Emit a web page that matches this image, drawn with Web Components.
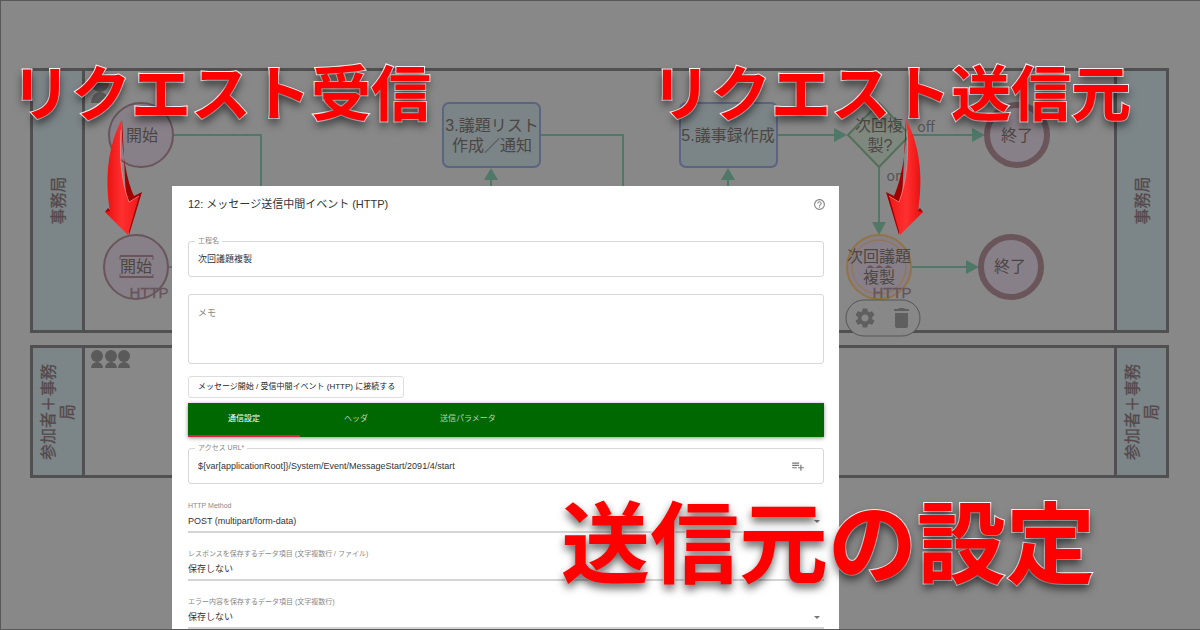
<!DOCTYPE html>
<html lang="ja">
<head>
<meta charset="utf-8">
<title>送信元の設定</title>
<style>
  html, body { height: 100%; }
  body { margin: 0; overflow: hidden; background: #888; font-family: "Liberation Sans", "Noto Sans CJK JP", sans-serif; }
</style>
</head>
<body>
<app-stage>
  <swim-lane people="1" size="tall">事務局</swim-lane>
  <swim-lane people="3">参加者＋事務局</swim-lane>
  <flow-graph slot="over"></flow-graph>
  <event-dialog slot="over" heading="12: メッセージ送信中間イベント (HTTP)">
    <text-field label="工程名" value="次回議題複製"></text-field>
    <text-field label="メモ" multiline></text-field>
    <connect-button>メッセージ開始 / 受信中間イベント (HTTP) に接続する</connect-button>
    <tab-bar tabs="通信設定,ヘッダ,送信パラメータ"></tab-bar>
    <text-field label="アクセス URL*" value="${var[applicationRoot]}/System/Event/MessageStart/2091/4/start" insert></text-field>
    <select-field label="HTTP Method" value="POST (multipart/form-data)"></select-field>
    <select-field label="レスポンスを保存するデータ項目 (文字複数行 / ファイル)" value="保存しない"></select-field>
    <select-field label="エラー内容を保存するデータ項目 (文字複数行)" value="保存しない"></select-field>
  </event-dialog>
  <callout-text slot="over" class="receive">リクエスト受信</callout-text>
  <callout-text slot="over" class="send">リクエスト送信元</callout-text>
  <callout-text slot="over" class="main">送信元の設定</callout-text>
  <red-arrow slot="over" class="left"></red-arrow>
  <red-arrow slot="over" class="right"></red-arrow>
</app-stage>

<script>
const define = (name, render) => customElements.define(name, class extends HTMLElement {
  constructor() { super(); this.attachShadow({ mode: 'open' }); }
  connectedCallback() { this.shadowRoot.innerHTML = render(this); }
});

define('app-stage', () => `
<style>
  :host { display: block; position: relative; box-sizing: border-box; height: 100vh; overflow: hidden; border: solid #585858; border-width: 1px 0 1px 1px; }
  .lanes { display: flex; flex-direction: column; gap: 12px; padding: 67px 31px 0 29px; }
  ::slotted(flow-graph) { position: absolute; left: -1px; top: -1px; }
  ::slotted(event-dialog) { position: absolute; left: 171px; right: 361px; top: 185px; }
  ::slotted(callout-text) { position: absolute; font-size: 60px; }
  ::slotted(.receive) { left: 10px; top: 59px; }
  ::slotted(.send) { left: 650px; top: 59px; }
  ::slotted(callout-text.main) { left: 560px; top: 492px; font-size: 89px; }
  ::slotted(red-arrow) { position: absolute; top: 117px; }
  ::slotted(red-arrow.left) { left: 102px; }
  ::slotted(red-arrow.right) { left: 884px; transform: scaleX(-1); }
</style>
<div class="lanes"><slot></slot></div>
<slot name="over"></slot>`);

define('swim-lane', el => {
  const one = '<circle cx="9" cy="10" r="9"/><path d="M0 30a9 11 0 0 1 18 0z"/>';
  const three = [0, 14, 27].map(x => `<g transform="translate(${x} 0)"><circle cx="6" cy="6" r="6"/><path d="M0 18a6 6 0 0 1 12 0z"/></g>`).join('');
  return `
<style>
  :host { display: flex; box-sizing: border-box; height: 133px; border: 3px solid #505050; }
  :host([size=tall]) { height: 265px; }
  .side { flex: none; box-sizing: border-box; width: 52px; display: flex; align-items: center; justify-content: center; background: #7c8588; }
  .side:first-of-type { border-right: 3px solid #505050; }
  .side:last-of-type { border-left: 3px solid #505050; }
  .side span { flex: none; width: 104px; text-align: center; transform: rotate(-90deg); font-size: 16px; line-height: 19px; color: #544848; -webkit-text-stroke: .3px #544848; }
  .body { flex: 1; }
  svg { display: block; margin: 2px 0 0 6px; fill: #5a5a5a; }
</style>
<div class="side"><span>${el.textContent}</span></div>
<main class="body"><svg width="42" height="30">${el.getAttribute('people') === '1' ? one : three}</svg></main>
<div class="side"><span>${el.textContent}</span></div>`;
});

define('flow-graph', () => {
  const label = (x, y, s, c = '') => `<text x="${x}" y="${y}" class="${c}">${s}</text>`;
  return `
<style>
  :host { display: block; }
  svg { display: block; }
  text { font-size: 16px; text-anchor: middle; fill: #4c4643; }
  .small { font-family: "Noto Sans CJK JP", sans-serif; font-size: 14px; fill: #555; }
  .http { font-size: 15px; fill: #66555a; stroke: #66555a; stroke-width: .3px; }
  .line { fill: none; stroke: #4f7869; stroke-width: 2; }
  .head { fill: #4f7869; }
  .task { fill: #7b8487; stroke: #5b6480; stroke-width: 2; }
  .start { fill: #888088; stroke: #69555a; stroke-width: 2; }
  .end { fill: #888088; stroke: #69555a; stroke-width: 6; }
</style>
<svg width="1200" height="500">
  <path class="line" d="M174 135H261V200M540 135H623V200M491 179V200M728 179V200M777 135H838M909 135H973M879 167V226M911 267H968M168 267H185"/>
  <path class="head" d="M491 168l7 12h-14zM728 168l7 12h-14zM847 135l-13 7v-14zM985 135l-13 7v-14zM879 235l-7-13h14zM979 267l-13 7v-14z"/>
  <circle class="start" cx="141" cy="135" r="32"/>
  <circle class="start" cx="136" cy="267" r="32"/>
  <path d="M120 256h33M120 277h33" stroke="#69555a" stroke-width="2"/><path d="M120 256v22M153 256v22" stroke="#69555a" stroke-dasharray="4 14"/>
  <rect class="task" x="443" y="103" width="97" height="64" rx="6"/>
  <rect class="task" x="680" y="103" width="97" height="64" rx="6"/>
  <path d="M848 135l31-32 31 32-31 32z" fill="#7f887f" stroke="#55705a" stroke-width="2"/>
  <circle class="end" cx="1017" cy="135" r="30"/>
  <circle class="end" cx="1011" cy="267" r="30"/>
  <g fill="#888088" stroke="#937345" stroke-width="2"><circle cx="879" cy="267" r="32"/><circle cx="879" cy="267" r="27" stroke-width="1"/></g>
  <path d="M866 268l4-3 5 3 4-3 5 3 4-3 5 3z" fill="#69555a"/>
  ${label(142, 141, '開始')}${label(136, 272, '開始')}
  ${label(149, 298, 'HTTP', 'http')}
  ${label(492, 131, '3.議題リスト')}${label(492, 151, '作成／通知')}
  ${label(728, 141, '5.議事録作成')}
  ${label(879, 131, '次回複')}${label(880, 151, '製?')}
  ${label(926, 132, 'off', 'small')}${label(895, 181, 'on', 'small')}
  ${label(1017, 141, '終了')}${label(1010, 272, '終了')}
  ${label(879, 262, '次回議題')}${label(879, 283, '複製')}
  ${label(892, 298, 'HTTP', 'http')}
  <rect x="846" y="300" width="74" height="36" rx="18" fill="#888" stroke="#555"/>
  <g fill="#5f5f5f">
    <path transform="translate(853 306)" d="M19.14 12.94c.04-.3.06-.61.06-.94 0-.32-.02-.64-.07-.94l2.03-1.58c.18-.14.23-.41.12-.61l-1.92-3.32c-.12-.22-.37-.29-.59-.22l-2.39.96c-.5-.38-1.03-.7-1.62-.94l-.36-2.54c-.04-.24-.24-.41-.48-.41h-3.84c-.24 0-.43.17-.47.41l-.36 2.54c-.59.24-1.13.57-1.62.94l-2.39-.96c-.22-.08-.47 0-.59.22L2.74 8.87c-.12.21-.08.47.12.61l2.03 1.58c-.05.3-.09.63-.09.94s.02.64.07.94l-2.03 1.58c-.18.14-.23.41-.12.61l1.92 3.32c.12.22.37.29.59.22l2.39-.96c.5.38 1.03.7 1.62.94l.36 2.54c.05.24.24.41.48.41h3.84c.24 0 .44-.17.47-.41l.36-2.54c.59-.24 1.13-.56 1.62-.94l2.39.96c.22.08.47 0 .59-.22l1.92-3.32c.12-.22.07-.47-.12-.61l-2.01-1.58zM12 15.6c-1.98 0-3.6-1.62-3.6-3.6s1.62-3.6 3.6-3.6 3.6 1.62 3.6 3.6-1.62 3.6-3.6 3.6z"/>
    <path transform="translate(889 306)" d="M6 20c0 1.100.9 2 2 2h9c1.100 0 2-.9 2-2V7H6zM20 3h-4l-1-1h-5l-1 1H5v2h15z"/>
  </g>
</svg>`;
});

define('event-dialog', el => `
<style>
  :host { display: block; box-sizing: border-box; min-height: 480px; padding: 0 15px 0 16px; background: #fff; color: #444; }
  header { display: flex; align-items: center; justify-content: space-between; height: 36px; margin-bottom: 19px; }
  h1 { margin: 0; font-size: 11px; font-weight: 400; line-height: 16px; color: #333; }
  button { padding: 0; margin-right: -2px; border: 0; background: none; height: 12px; }
  svg { display: block; fill: #888; }
</style>
<header><h1>${el.getAttribute('heading')}</h1>
<button aria-label="help"><svg width="13" height="13" viewBox="0 0 24 24"><path d="M11 18h2v-2h-2v2zm1-16C6.480 2 2 6.480 2 12s4.480 10 10 10 10-4.480 10-10S17.520 2 12 2zm0 18c-4.410 0-8-3.590-8-8s3.590-8 8-8 8 3.590 8 8-3.590 8-8 8zm0-14c-2.210 0-4 1.790-4 4h2c0-1.100.9-2 2-2s2 .9 2 2c0 2-3 1.750-3 5h2c0-2.250 3-2.500 3-5 0-2.210-1.790-4-4-4z"/></svg></button></header>
<slot></slot>`);

define('text-field', el => `
<style>
  :host { display: flex; align-items: center; position: relative; box-sizing: border-box; height: 36px; margin-bottom: 17px; border: 1px solid #d8d8d8; border-radius: 3px; padding: 0 18px 0 9px; }
  :host([multiline]) { height: 70px; margin-bottom: 12px; }
  :host([insert]) { margin-bottom: 17px; }
  label { position: absolute; left: 6px; top: -6px; padding: 0 3px; background: #fff; font-size: 7px; line-height: 9px; color: #888; }
  :host([multiline]) label { top: 12px; font-size: 9px; line-height: 12px; }
  input, textarea { flex: 1; min-width: 0; box-sizing: border-box; border: 0; padding: 0; outline: 0; resize: none; background: none; font: 9px/16px "Liberation Sans", "Noto Sans CJK JP", sans-serif; color: #333; }
  textarea { height: 60px; }
  button { padding: 0; border: 0; background: none; }
  svg { display: block; fill: #777; }
</style>
<label for="f">${el.getAttribute('label')}</label>
${el.hasAttribute('multiline') ? '<textarea id="f"></textarea>' : `<input id="f" value="${el.getAttribute('value')}">`}
${el.hasAttribute('insert') ? '<button aria-label="insert"><svg width="14" height="14" viewBox="0 0 24 24"><path d="M14 10H2v2h12v-2zm0-4H2v2h12V6zm4 8v-4h-2v4h-4v2h4v4h2v-4h4v-2h-4zM2 16h8v-2H2v2z"/></svg></button>' : ''}`);

define('connect-button', () => `
<style>
  :host { display: flex; margin-bottom: 5px; }
  button { box-sizing: border-box; height: 22px; padding: 0 8px 0 9px; border: 1px solid #ddd; border-radius: 3px; background: #fff; color: #222; font: 8px/16px "Liberation Sans", "Noto Sans CJK JP", sans-serif; }
</style>
<button><slot></slot></button>`);

define('tab-bar', el => `
<style>
  :host { display: flex; height: 34px; margin-bottom: 11px; background: #006800; box-shadow: 0 1px 4px rgba(0,0,0,.45); }
  button { width: 112px; padding: 0; border: 0; border-bottom: 2px solid transparent; background: none; color: #b5d3b5; font: 8px/16px "Liberation Sans", "Noto Sans CJK JP", sans-serif; }
  button:first-of-type { border-color: #e0204a; color: #fff; }
</style>
${el.getAttribute('tabs').split(',').map((t, i) => `<button role="tab" aria-selected="${i === 0}">${t}</button>`).join('')}`);

define('select-field', el => `
<style>
  :host { display: flex; flex-direction: column; position: relative; box-sizing: border-box; height: 32px; margin-bottom: 16px; border-bottom: 2px solid #d4d4d4; }
  label { font-size: 7px; line-height: 10px; color: #888; }
  select { appearance: none; height: 20px; width: 100%; padding: 0; border: 0; background: none; font: 9px/20px "Liberation Sans", "Noto Sans CJK JP", sans-serif; color: #333; outline: 0; }
  svg { position: absolute; right: 4px; bottom: 8px; fill: #777; }
</style>
<label for="s">${el.getAttribute('label')}</label>
<select id="s"><option>${el.getAttribute('value')}</option></select>
<svg width="6" height="3"><path d="M0 0h6L3 3z"/></svg>`);

define('callout-text', () => `
<style>
  :host { display: block; white-space: nowrap; line-height: 1; font-family: "Noto Sans CJK JP", sans-serif; font-weight: 700; color: #f00; -webkit-text-stroke: 2px #fff; paint-order: stroke fill; text-shadow: 0 5px 8px rgba(0,0,0,.6); }
</style>
<slot></slot>`);

define('red-arrow', () => `
<style>
  :host { display: block; }
  svg { display: block; }
</style>
<svg width="40" height="120">
  <defs><linearGradient id="g" x1="0" y1="0" x2="1" y2="0"><stop offset="0" stop-color="#e80c0c"/><stop offset=".5" stop-color="#ff3030"/><stop offset="1" stop-color="#f01818"/></linearGradient></defs>
  <path d="M19 1C18 30 23 60 31 78L39 74 26 117 24 100z" fill="#a00000"/>
  <path d="M2 94L5 90 9 94z" fill="#a00000"/>
  <path d="M19 1C4 30 2 62 7 93L2 94 25 117 36 78 26 84C19 65 15 40 19 1z" fill="url(#g)"/>
  <path d="M18 12C16 40 19 66 26 84L36 78" fill="none" stroke="#ff8a8a" stroke-width=".7"/>
</svg>`);
</script>
</body>
</html>
